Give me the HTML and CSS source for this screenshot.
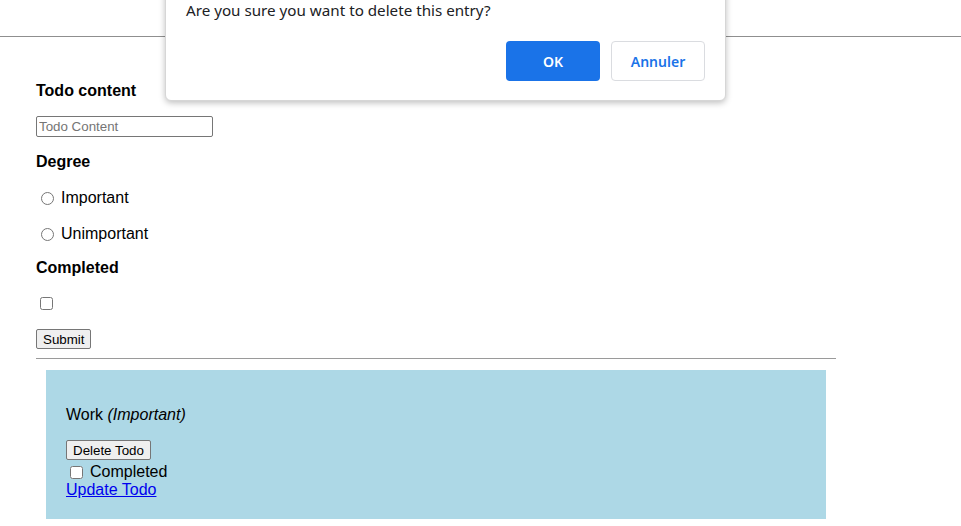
FILE: index.html
```html
<!DOCTYPE html>
<html>
<head>
<meta charset="utf-8">
<link rel="stylesheet" href="styles.css">
</head>
<body>
<div class="topbar"></div>
<main class="page">
  <form class="todo-form">
    <div class="label first">Todo content</div>
    <input class="text-input" type="text" placeholder="Todo Content">
    <div class="label degree">Degree</div>
    <label class="radio-row r1"><input type="radio" name="deg"> Important</label>
    <label class="radio-row r2"><input type="radio" name="deg"> Unimportant</label>
    <div class="label completed">Completed</div>
    <div class="check-row"><input type="checkbox"></div>
    <button type="button" class="btn submit">Submit</button>
  </form>
  <div class="rule"></div>
  <section class="card">
    <p class="todo-title">Work <em>(Important)</em></p>
    <button type="button" class="btn">Delete Todo</button>
    <label class="card-check"><input type="checkbox"> Completed</label>
    <a href="#" class="update-link">Update Todo</a>
  </section>
</main>
<div class="dialog">
  <p class="dialog-msg">Are you sure you want to delete this entry?</p>
  <div class="dialog-actions">
    <button type="button" class="dlg-btn ok">OK</button>
    <button type="button" class="dlg-btn cancel">Annuler</button>
  </div>
</div>
</body>
</html>
```
FILE: styles.css
```css
html, body {
  margin: 0;
  padding: 0;
  background: #fff;
}
body {
  font-family: "Liberation Sans", Arial, sans-serif;
  font-size: 16px;
  line-height: 18px;
  color: #000;
  width: 961px;
  height: 526px;
  overflow: hidden;
}
.topbar {
  height: 36px;
  border-bottom: 1px solid #8f8f8f;
}
.page {
  margin-left: 36px;
  width: 800px;
}
.todo-form {
  display: flex;
  flex-direction: column;
  align-items: flex-start;
}
.label {
  font-weight: bold;
  height: 18px;
}
.label.first { margin-top: 45px; }
.text-input {
  margin: 16px 0 0 0;
  box-sizing: border-box;
  width: 177px;
  height: 21px;
  border: 1px solid #767676;
  border-radius: 2px;
  padding: 1px 2px;
  font-family: "Liberation Sans", Arial, sans-serif;
  font-size: 13.33px;
}
.text-input::placeholder { color: #757575; }
.label.degree { margin-top: 16px; }
.radio-row {
  display: flex;
  align-items: center;
  height: 18px;
  gap: 0;
}
.radio-row input {
  margin: 0 7px 0 5px;
  width: 13px;
  height: 13px;
}
.radio-row.r1 { margin-top: 18px; }
.radio-row.r2 { margin-top: 18px; }
.label.completed { margin-top: 16px; }
.check-row {
  margin-top: 17px;
  height: 18px;
  display: flex;
  align-items: center;
}
.check-row input {
  margin: 0 0 0 4px;
  width: 13px;
  height: 13px;
}
.btn {
  font-family: "Liberation Sans", Arial, sans-serif;
  font-size: 13.33px;
  height: 20px;
  padding: 1px 6px;
  border: 1px solid #767676;
  border-radius: 2px;
  background: #efefef;
  color: #000;
  line-height: 15px;
}
.submit { margin-top: 17px; }
.rule {
  margin-top: 9px;
  border-top: 1px solid #9a9a9a;
  width: 800px;
}
.card {
  margin: 11px 0 0 10px;
  width: 780px;
  height: 149px;
  box-sizing: border-box;
  background: #add8e6;
  padding: 36px 20px 0 20px;
  display: flex;
  flex-direction: column;
  align-items: flex-start;
}
.todo-title {
  margin: 0;
  height: 18px;
}
.card .btn { margin-top: 16px; }
.card-check {
  display: flex;
  align-items: center;
  height: 18px;
  margin-top: 3px;
}
.card-check input {
  margin: 0 7px 0 4px;
  width: 13px;
  height: 13px;
}
.update-link {
  color: #0000ee;
  text-decoration: underline;
  height: 18px;
}
.dialog {
  position: absolute;
  left: 165px;
  top: -10px;
  width: 561px;
  height: 111px;
  box-sizing: border-box;
  background: #fff;
  border: 1px solid #d6d6d6;
  border-radius: 0 0 6px 6px;
  box-shadow: 0 2px 6px rgba(0,0,0,0.25);
  font-family: "Noto Sans", "Open Sans", sans-serif;
}
.dialog-msg {
  margin: 0;
  position: absolute;
  left: 20px;
  top: 8px;
  font-size: 15.2px;
  line-height: 22px;
  color: #202124;
}
.dialog-actions {
  position: absolute;
  right: 20px;
  top: 50px;
  display: flex;
  gap: 11px;
}
.dlg-btn {
  width: 94px;
  height: 40px;
  border-radius: 4px;
  font-family: "Noto Sans", "Open Sans", sans-serif;
  font-size: 14px;
  font-weight: 600;
}
.dlg-btn.ok {
  background: #1a73e8;
  color: #fff;
  border: none;
}
.dlg-btn.cancel {
  background: #fff;
  color: #1a73e8;
  border: 1px solid #dadce0;
}
```
